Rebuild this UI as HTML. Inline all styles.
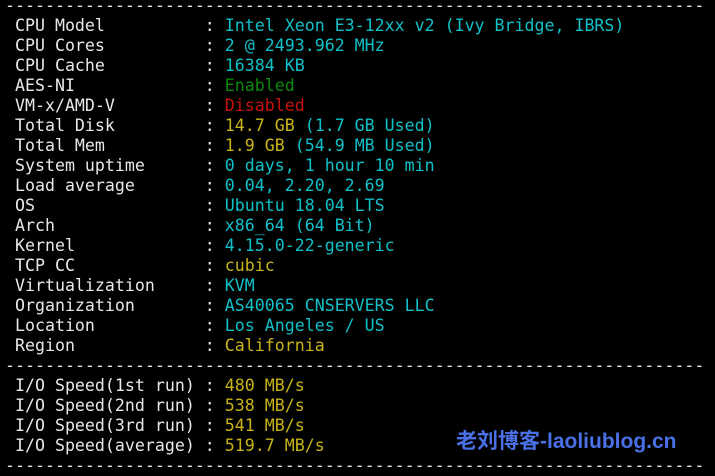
<!DOCTYPE html>
<html><head><meta charset="utf-8"><style>
html,body{margin:0;padding:0;background:#000;width:715px;height:474px;overflow:hidden}
pre{position:absolute;left:5px;top:-4px;margin:0;font-family:"DejaVu Sans Mono",monospace;font-size:16.6px;line-height:20px;color:#e8e8e8;white-space:pre}
.c{color:#10c0c8}.y{color:#c8b418}.g{color:#0b8a0b}.r{color:#c81010}
.wm{position:absolute;left:456px;top:425px;font-family:"Liberation Sans","Noto Sans CJK SC",sans-serif;font-weight:bold;font-size:21px;color:#4a70e6}
</style></head><body>
<pre>----------------------------------------------------------------------
 CPU Model          : <span class="c">Intel Xeon E3-12xx v2 (Ivy Bridge, IBRS)</span>
 CPU Cores          : <span class="c">2 @ 2493.962 MHz</span>
 CPU Cache          : <span class="c">16384 KB</span>
 AES-NI             : <span class="g">Enabled</span>
 VM-x/AMD-V         : <span class="r">Disabled</span>
 Total Disk         : <span class="y">14.7 GB</span> <span class="c">(1.7 GB Used)</span>
 Total Mem          : <span class="y">1.9 GB</span> <span class="c">(54.9 MB Used)</span>
 System uptime      : <span class="c">0 days, 1 hour 10 min</span>
 Load average       : <span class="c">0.04, 2.20, 2.69</span>
 OS                 : <span class="c">Ubuntu 18.04 LTS</span>
 Arch               : <span class="c">x86_64 (64 Bit)</span>
 Kernel             : <span class="c">4.15.0-22-generic</span>
 TCP CC             : <span class="y">cubic</span>
 Virtualization     : <span class="c">KVM</span>
 Organization       : <span class="c">AS40065 CNSERVERS LLC</span>
 Location           : <span class="c">Los Angeles / US</span>
 Region             : <span class="y">California</span>
----------------------------------------------------------------------
 I/O Speed(1st run) : <span class="y">480 MB/s</span>
 I/O Speed(2nd run) : <span class="y">538 MB/s</span>
 I/O Speed(3rd run) : <span class="y">541 MB/s</span>
 I/O Speed(average) : <span class="y">519.7 MB/s</span>
----------------------------------------------------------------------</pre>
<div class="wm">老刘博客-laoliublog.cn</div>
</body></html>
